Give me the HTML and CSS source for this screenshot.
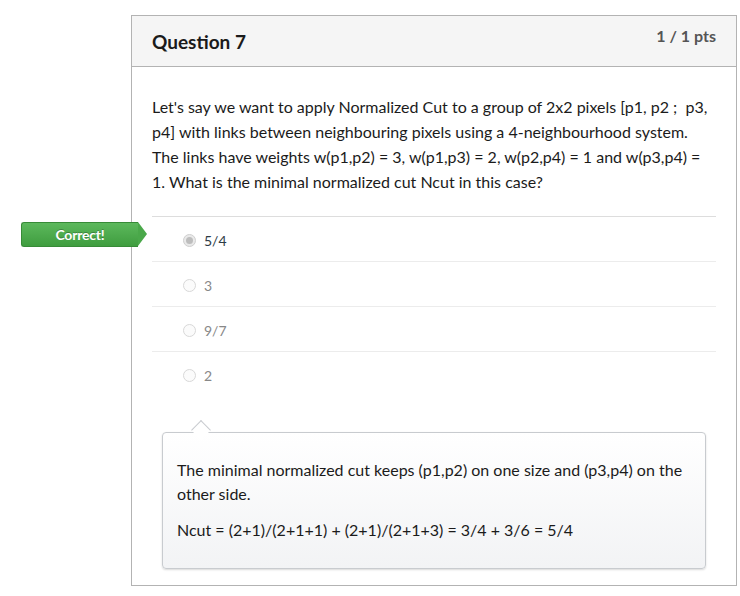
FILE: index.html
```html
<!DOCTYPE html>
<html>
<head>
<meta charset="utf-8">
<link rel="stylesheet" href="styles.css">
</head>
<body>
<div class="card">
  <div class="header">
    <span class="qname">Question 7</span>
    <span class="pts">1 / 1 pts</span>
  </div>
  <div class="content">
    <p class="qtext">Let's say we want to apply Normalized Cut to a group of 2x2 pixels [p1, p2 ;&nbsp; p3, p4] with links between neighbouring pixels using a 4-neighbourhood system. The links have weights w(p1,p2) = 3, w(p1,p3) = 2, w(p2,p4) = 1 and w(p3,p4) = 1. What is the minimal normalized cut Ncut in this case?</p>
    <div class="answers">
      <div class="answer selected">
        <span class="tag">Correct!</span>
        <span class="radio checked"></span><span class="atext">5/4</span>
      </div>
      <div class="answer"><span class="radio"></span><span class="atext">3</span></div>
      <div class="answer"><span class="radio"></span><span class="atext">9/7</span></div>
      <div class="answer"><span class="radio"></span><span class="atext">2</span></div>
    </div>
    <div class="comment">
      <p>The minimal normalized cut keeps (p1,p2) on one size and (p3,p4) on the other side.</p>
      <p>Ncut = (2+1)/(2+1+1) + (2+1)/(2+1+3) = 3/4 + 3/6 = 5/4</p>
    </div>
  </div>
</div>
</body>
</html>
```
FILE: styles.css
```css
html, body { margin: 0; padding: 0; background: #fff; }
body { font-family: Lato, "Open Sans", sans-serif; color: #2d3b45; }
.card {
  margin: 15px 0 0 131px;
  width: 604px;
  border: 1px solid #b3b3b3;
  background: #fff;
}
.header {
  display: flex;
  justify-content: space-between;
  align-items: flex-start;
  background: #f5f5f5;
  border-bottom: 1px solid #b3b3b3;
  height: 50px;
  padding: 0 20px;
}
.qname { font-size: 19px; font-weight: 700; margin-top: 14px; line-height: 24px; color: #1b1b1b; }
.pts { font-size: 16px; font-weight: 700; color: #555; margin-top: 8px; line-height: 24px; }
.content { padding: 27px 20px 16px; }
.qtext { margin: 0 0 22px; font-size: 16px; line-height: 25px; color: #1b1b1b; }
.answers { border-top: 1px solid #ddd; }
.answer {
  position: relative;
  height: 44px;
  display: flex;
  align-items: center;
  padding-left: 30px;
  border-bottom: 1px solid #ececec;
  font-size: 14px;
  color: #888;
}
.answer:last-child { border-bottom: 0; }
.answer.selected { color: #2d3b45; }
.answer .atext { margin-left: 8px; position: relative; top: 1px; }
.radio {
  width: 11px; height: 11px;
  border-radius: 50%;
  border: 1px solid #d8d8d8;
  background: #fbfbfb;
  position: relative;
  top: 1px;
  margin-left: 1px;
}
.radio.checked { background: #e9e9e9; border-color: #cfcfcf; }
.radio.checked::after {
  content: ""; position: absolute; left: 2px; top: 2px;
  width: 7px; height: 7px; border-radius: 50%; background: #bdbdbd;
}
.tag {
  position: absolute;
  left: -131px;
  top: 5px;
  width: 117px;
  height: 25px;
  box-sizing: border-box;
  background: linear-gradient(#5cb85c, #3f9d3f);
  border: 1px solid #378b37;
  border-right: 0;
  border-radius: 3px 0 0 3px;
  color: #fff;
  font-size: 14px;
  font-weight: 700;
  line-height: 23px;
  text-align: center;
  text-shadow: 0 -1px 0 rgba(0,0,0,0.25);
  letter-spacing: -0.2px;
}
.tag::after {
  content: "";
  position: absolute;
  right: -9px;
  top: -1px;
  border-left: 9px solid #4aa84a;
  border-top: 12.5px solid transparent;
  border-bottom: 12.5px solid transparent;
}
.comment {
  position: relative;
  margin: 36px 10px 0;
  border: 1px solid #c8cbcf;
  border-radius: 4px;
  background: linear-gradient(#fff, #f2f3f5);
  box-shadow: 0 1px 2px rgba(0,0,0,0.15);
  padding: 25px 14px 14px;
  font-size: 16px;
  line-height: 24px;
  color: #1b1b1b;
}
.comment p { margin: 0 0 12px; }
.comment::before {
  content: "";
  position: absolute;
  left: 31px;
  top: -10px;
  width: 13px; height: 13px;
  background: #fff;
  border-left: 1px solid #c8cbcf;
  border-top: 1px solid #c8cbcf;
  transform: rotate(45deg);
  transform-origin: center;
}
```
